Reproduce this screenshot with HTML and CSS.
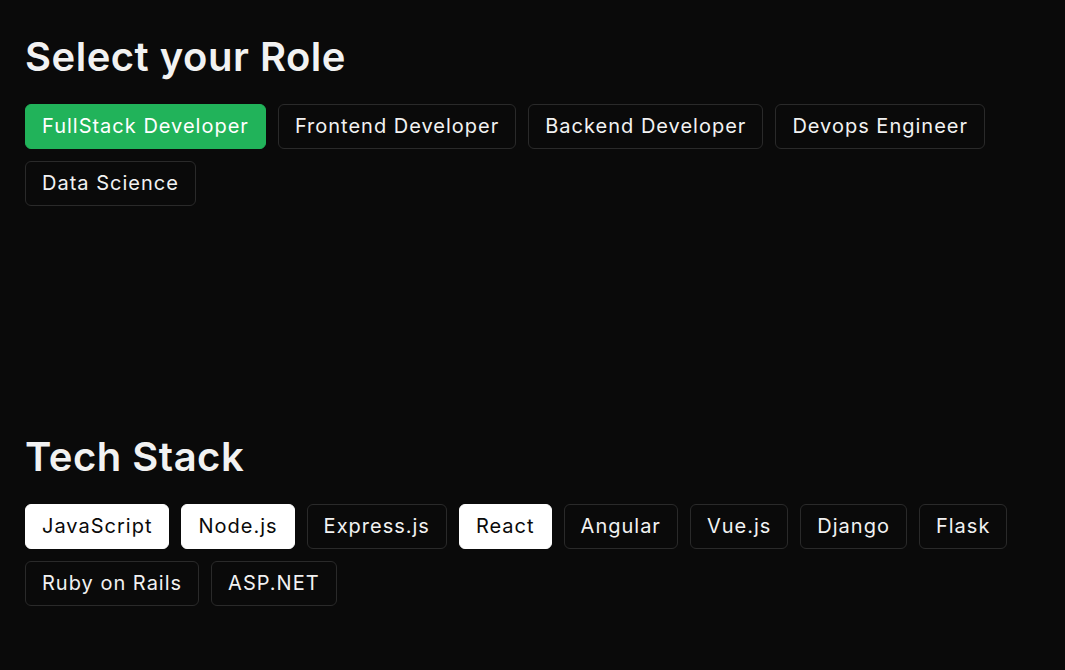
FILE: index.html
```html
<!DOCTYPE html>
<html lang="en">
<head>
<meta charset="utf-8">
<title>Select your Role</title>
<link rel="stylesheet" href="styles.css">
</head>
<body>
<main class="page">
  <section class="section section-role">
    <h1 class="title">Select your Role</h1>
    <div class="chips">
      <button class="chip chip-green">FullStack Developer</button>
      <button class="chip">Frontend Developer</button>
      <button class="chip">Backend Developer</button>
      <button class="chip">Devops Engineer</button>
      <button class="chip">Data Science</button>
    </div>
  </section>
  <section class="section section-tech">
    <h1 class="title">Tech Stack</h1>
    <div class="chips">
      <button class="chip chip-white">JavaScript</button>
      <button class="chip chip-white">Node.js</button>
      <button class="chip">Express.js</button>
      <button class="chip chip-white">React</button>
      <button class="chip">Angular</button>
      <button class="chip">Vue.js</button>
      <button class="chip">Django</button>
      <button class="chip">Flask</button>
      <button class="chip">Ruby on Rails</button>
      <button class="chip">ASP.NET</button>
    </div>
  </section>
</main>
</body>
</html>
```
FILE: styles.css
```css
html, body {
  margin: 0;
  padding: 0;
  background: #0a0a0a;
  color: #f2f2f2;
  font-family: Inter, "Noto Sans", sans-serif;
}
.page {
  padding: 37px 25px 0;
}
.section-role {
  height: 400px;
}
.title {
  margin: 0 0 27px;
  font-size: 40px;
  line-height: 40px;
  font-weight: 600;
  letter-spacing: 0.5px;
  color: #f2f2f2;
}
.chips {
  display: flex;
  flex-wrap: wrap;
  gap: 12px 12px;
  max-width: 1000px;
}
.chip {
  font-family: inherit;
  font-size: 20px;
  line-height: 27px;
  letter-spacing: 1px;
  padding: 8px 16px;
  border: 1px solid #2a2a2a;
  border-radius: 6px;
  background: #0a0a0a;
  color: #f2f2f2;
  cursor: pointer;
}
.chip-green {
  background: #21b35a;
  border-color: #21b35a;
  color: #ffffff;
}
.chip-white {
  background: #ffffff;
  border-color: #ffffff;
  color: #0a0a0a;
}
```
